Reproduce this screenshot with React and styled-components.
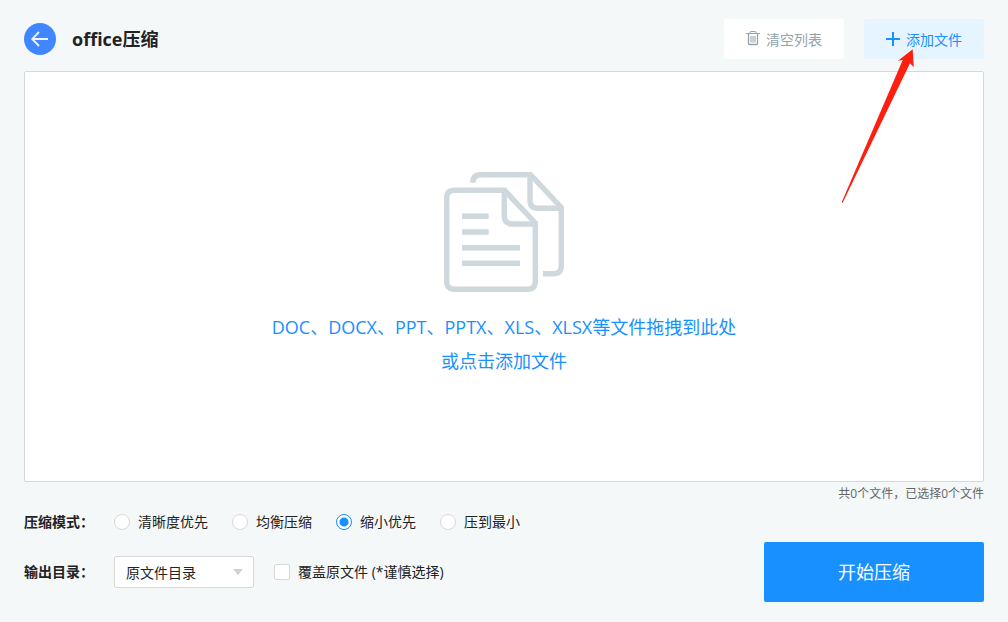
import React, { useState } from "react";
import styled, { createGlobalStyle } from "styled-components";

const GlobalStyle = createGlobalStyle`
  * {
    box-sizing: border-box;
  }
  body {
    margin: 0;
    background: #f4f8f9;
  }
  body, button, input, select {
    font-family: "Open Sans", "Noto Sans CJK SC", sans-serif;
    font-size: 14px;
    color: #222;
  }
`;

const Page = styled.main`
  display: flex;
  flex-direction: column;
  min-height: 100vh;
  padding: 19px 24px 20px;
`;

const Header = styled.header`
  display: flex;
  align-items: center;
  justify-content: space-between;
  margin-bottom: 12px;
`;

const TitleGroup = styled.div`
  display: flex;
  align-items: center;
  gap: 16px;
`;

const BackButton = styled.button`
  display: flex;
  width: 32px;
  height: 32px;
  padding: 0;
  border: 0;
  border-radius: 50%;
  background: #4086ff;
  cursor: pointer;
`;

const Title = styled.h1`
  margin: 0;
  font-size: 18px;
  line-height: 38px;
`;

const Actions = styled.div`
  position: relative;
  display: flex;
  gap: 20px;
`;

const ActionButton = styled.button`
  display: flex;
  align-items: center;
  justify-content: center;
  gap: 6px;
  width: 120px;
  height: 40px;
  padding: 0;
  border: 0;
  border-radius: 2px;
  line-height: 20px;
  background: ${(props) => (props.$primary ? "#e6f4ff" : "#fff")};
  color: ${(props) => (props.$primary ? "#1890ff" : "#93a3aa")};
  cursor: pointer;
`;

const ActionText = styled.span`
  padding-top: 2px;
`;

// sits over the header and the drop zone
const Pointer = styled.svg`
  position: absolute;
  top: 28px;
  right: 68px;
  pointer-events: none;
`;

const DropZone = styled.button`
  display: flex;
  flex: 1;
  flex-direction: column;
  align-items: center;
  justify-content: center;
  gap: 18px;
  padding: 20px 20px 24px;
  border: 1px solid #d4d8d9;
  border-radius: 2px;
  background: #fff;
  color: #1890ff;
  font-size: 18px;
  line-height: 34px;
  cursor: pointer;
`;

const DropText = styled.span`
  display: block;
`;

const Footer = styled.footer`
  display: flex;
  justify-content: space-between;
`;

const Options = styled.div`
  display: flex;
  flex-direction: column;
  gap: 24px;
  padding-top: 30px;
`;

const OptionRow = styled.div`
  display: flex;
  align-items: center;
  line-height: 20px;
`;

const OptionLabel = styled.label`
  width: 90px;
  font-weight: bold;
`;

const Choices = styled.div`
  display: flex;
  gap: 24px;
`;

const Choice = styled.label`
  display: flex;
  align-items: center;
  gap: 8px;
`;

const Radio = styled.input`
  appearance: none;
  width: 16px;
  height: 16px;
  margin: 0;
  border: 1px solid #d9d9d9;
  border-radius: 50%;
  background: #fff;

  &:checked {
    border-color: #1890ff;
    background: radial-gradient(circle, #1890ff 4px, #fff 5px);
  }
`;

const Checkbox = styled.input`
  appearance: none;
  width: 16px;
  height: 16px;
  margin: 0;
  border: 1px solid #d9d9d9;
  border-radius: 2px;
  background: #fff;

  &:checked {
    border-color: #1890ff;
    background: #1890ff;
  }
`;

const SelectWrap = styled.div`
  position: relative;
  width: 140px;
  margin-right: 20px;

  svg {
    position: absolute;
    top: 13px;
    right: 11px;
    pointer-events: none;
  }
`;

const Select = styled.select`
  display: block;
  appearance: none;
  width: 100%;
  height: 32px;
  padding: 0 11px;
  border: 1px solid #d9d9d9;
  border-radius: 2px;
  background: #fff;
`;

const Submit = styled.div`
  display: flex;
  flex-direction: column;
  align-items: flex-end;
  justify-content: space-between;
  gap: 36px;
`;

const Summary = styled.p`
  margin: 0;
  color: #666;
  font-size: 12px;
  line-height: 24px;
`;

const StartButton = styled.button`
  width: 220px;
  height: 60px;
  padding: 0 0 2px;
  border: 0;
  border-radius: 2px;
  background: #1890ff;
  color: #fff;
  font-size: 18px;
  cursor: pointer;
`;

const BackIcon = () => (
  <svg width="32" height="32" viewBox="0 0 32 32" fill="none" stroke="#eef4ff" strokeWidth="1.8">
    <path d="M24 16H8.5M15 9L8.2 16L15 23" />
  </svg>
);

const TrashIcon = () => (
  <svg width="14" height="16" viewBox="0 0 14 16" fill="none" stroke="currentColor">
    <path d="M0 2.5H14M4 2.5V1.5Q4 0.5 5 0.5H9Q10 0.5 10 1.5V2.5" />
    <path d="M2.5 2.5V12.5Q2.5 13.5 3.5 13.5H10.5Q11.5 13.5 11.5 12.5V2.5" strokeWidth="1.3" />
    <path d="M5 5V11.5M7 5V11.5M9 5V11.5" />
  </svg>
);

const PlusIcon = () => (
  <svg width="14" height="16" viewBox="0 0 14 16" stroke="currentColor" strokeWidth="2">
    <path d="M0 8H14M7 1V15" />
  </svg>
);

const DocumentsIcon = () => (
  <svg width="120" height="120" viewBox="0 0 120 120" fill="none" stroke="#cfd8dd" strokeWidth="5.4">
    <path d="M28.8 10.7Q28.8 2.7 36.8 2.7H86.5L117.3 35.5V93.7Q117.3 101.7 109.3 101.7H99" />
    <path d="M86 2.7V28.3Q86 36.3 94 36.3H117.3" />
    <path d="M10.7 18.3H60.5L91.3 51V109.3Q91.3 117.3 83.3 117.3H10.7Q2.7 117.3 2.7 109.3V26.3Q2.7 18.3 10.7 18.3Z" />
    <path d="M60.3 18.3V44Q60.3 52 68.3 52H91.3" />
    <path d="M18 44.3H44.7M18 60H44.7M18 75.7H76M18 91.3H76" />
  </svg>
);

const modes = ["清晰度优先", "均衡压缩", "缩小优先", "压到最小"];

export default function App() {
  const [mode, setMode] = useState("缩小优先");
  const [overwrite, setOverwrite] = useState(false);

  return (
    <>
      <GlobalStyle />
      <Page>
        <Header>
          <TitleGroup>
            <BackButton type="button" aria-label="返回">
              <BackIcon />
            </BackButton>
            <Title>office压缩</Title>
          </TitleGroup>
          <Actions>
            <ActionButton type="button">
              <TrashIcon />
              <ActionText>清空列表</ActionText>
            </ActionButton>
            <ActionButton type="button" $primary>
              <PlusIcon />
              <ActionText>添加文件</ActionText>
            </ActionButton>
            <Pointer width="76" height="158" viewBox="0 0 76 158">
              <path
                d="M72.7 2.3L73.7 20.3L70 16.3L2.8 155.5Q1.8 156 1.8 155L62.7 13L58 13.7Z"
                fill="#ff1f0f"
              />
            </Pointer>
          </Actions>
        </Header>

        <DropZone type="button">
          <DocumentsIcon />
          <span>
            <DropText>DOC、DOCX、PPT、PPTX、XLS、XLSX等文件拖拽到此处</DropText>
            <DropText>或点击添加文件</DropText>
          </span>
        </DropZone>

        <Footer>
          <Options>
            <OptionRow role="radiogroup" aria-labelledby="mode-label">
              <OptionLabel as="span" id="mode-label">
                压缩模式：
              </OptionLabel>
              <Choices>
                {modes.map((name) => (
                  <Choice key={name}>
                    <Radio
                      type="radio"
                      name="mode"
                      checked={mode === name}
                      onChange={() => setMode(name)}
                    />
                    {name}
                  </Choice>
                ))}
              </Choices>
            </OptionRow>
            <OptionRow>
              <OptionLabel htmlFor="output">输出目录：</OptionLabel>
              <SelectWrap>
                <Select id="output">
                  <option>原文件目录</option>
                </Select>
                <svg width="10" height="6" viewBox="0 0 10 6">
                  <path d="M0 0H10L5 6Z" fill="#d0d3d4" />
                </svg>
              </SelectWrap>
              <Choice>
                <Checkbox
                  type="checkbox"
                  checked={overwrite}
                  onChange={() => setOverwrite(!overwrite)}
                />
                覆盖原文件 (*谨慎选择)
              </Choice>
            </OptionRow>
          </Options>
          <Submit>
            <Summary>共0个文件，已选择0个文件</Summary>
            <StartButton type="button">开始压缩</StartButton>
          </Submit>
        </Footer>
      </Page>
    </>
  );
}
